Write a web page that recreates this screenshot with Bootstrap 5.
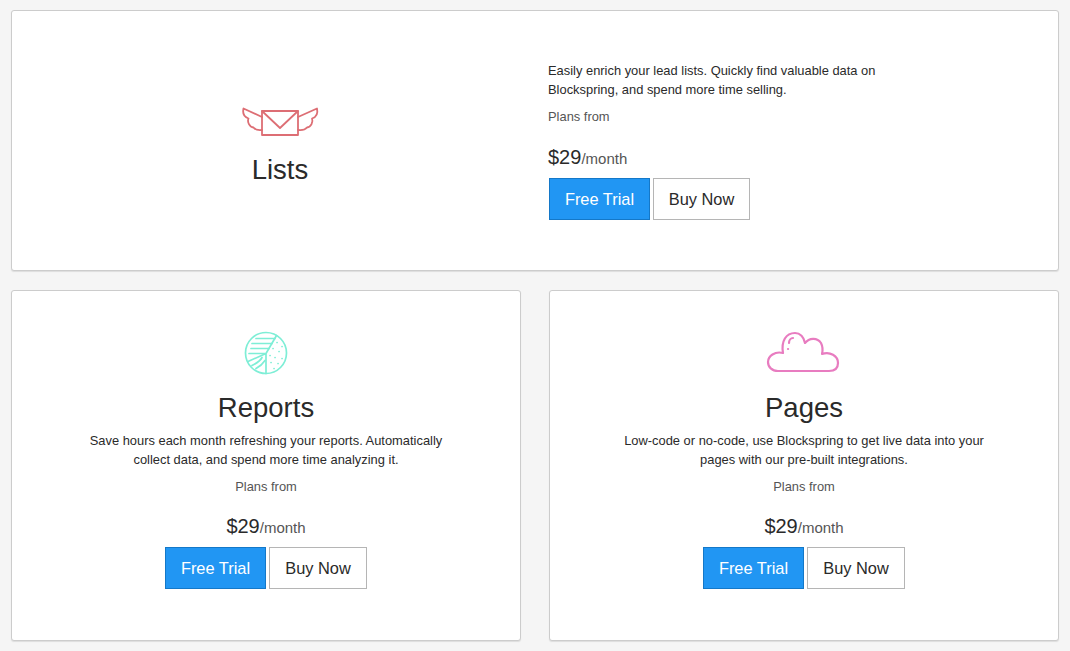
<!DOCTYPE html>
<html lang="en">
<head>
    <meta charset="UTF-8">
    <meta name="viewport" content="width=device-width, initial-scale=1.0">
    <title>Blockspring Plans</title>
    <link href="https://cdn.jsdelivr.net/npm/bootstrap@5.3.0/dist/css/bootstrap.min.css" rel="stylesheet">
    <style>
        body { background: #f5f5f5; padding: 10px 11px; font-family: "Liberation Sans", Arial, sans-serif; color: #222; overflow: hidden; }
        .plan-card { background: #fff; border: 1px solid #ccc; border-radius: 3px; box-shadow: 0 1px 1px #ddd; }
        .plan-top { height: 261px; margin-bottom: 19px; }
        .plan-grid { display: grid; grid-template-columns: 510px 510px; column-gap: 28px; }
        .plan-bottom { height: 351px; padding-top: 40px; }
        .plan-side { width: 536px; padding-top: 95px; }
        .plan-info { padding-top: 50px; }
        .plan-title { font-size: 27.5px; line-height: 34px; font-weight: 400; margin: 0; color: #2a2a2a; }
        .plan-desc { font-size: 12.9px; line-height: 19px; margin: 0; color: #2a2a2a; }
        .plan-from { font-size: 12.9px; line-height: 18px; color: #555; margin: 0; }
        .plan-price { font-size: 20px; line-height: 24px; color: #2a2a2a; margin: 0; }
        .plan-price small { font-size: 15px; color: #555; }
        .plan-actions { gap: 3px; }
        .btn-trial, .btn-buy { font-size: 16.4px; line-height: 20px; border-radius: 0; padding: 10px 12px; height: 42px; }
        .btn-trial { background: #2196f3; border: 1px solid #1478c8; color: #fff; width: 101px; }
        .btn-buy { background: #fff; border: 1px solid #b5b5b5; color: #2a2a2a; width: 97px; }
        .plan-bottom .btn-buy { width: 98px; }
        .plan-icon { display: block; fill: none; stroke-linecap: round; stroke-linejoin: round; margin-bottom: 15px; overflow: visible; }
        .plan-bottom .plan-icon { margin-bottom: 16px; }
        .icon-mail { stroke: #dd6e74; stroke-width: 1.8; }
        .icon-pie { stroke: #7eeed6; stroke-width: 1.7; }
        .icon-cloud { stroke: #e87cc0; stroke-width: 2.2; }
        .plan-bottom .plan-desc { margin-top: 6px; }
        .plan-bottom .plan-from { margin-top: 9px; }
        .plan-bottom .plan-price { margin-top: 18px; margin-bottom: 7px; }
        .plan-info .plan-from { margin-top: 9px; }
        .plan-info .plan-price { margin-top: 19px; margin-bottom: 7px; }
        .plan-info .plan-actions { padding-left: 1px; }
    </style>
</head>
<body>
    <div class="plan-card plan-top d-flex">
        <div class="plan-side text-center">
            <svg class="plan-icon icon-mail mx-auto" width="76" height="32" viewBox="0 0 76 32">
                <rect x="20" y="5" width="36" height="24"/>
                <path d="M20 5 38 22 56 5"/>
                <path d="M20 11 1.500 2.500C.5 7 2 11 6.500 12.500 5 16 7.500 21 11.500 21.500 13.500 24 16 24.500 20 24"/>
                <path d="M56 11 75 2.500C76 7 74.500 11 70 12.500 71.500 16 69 21 65 21.500 63 24 60 24.500 56 24"/>
            </svg>
            <h2 class="plan-title">Lists</h2>
        </div>
        <div class="plan-info">
            <p class="plan-desc">Easily enrich your lead lists. Quickly find valuable data on<br>Blockspring, and spend more time selling.</p>
            <p class="plan-from">Plans from</p>
            <p class="plan-price">$29<small>/month</small></p>
            <div class="plan-actions d-flex">
                <button class="btn btn-trial">Free Trial</button>
                <button class="btn btn-buy">Buy Now</button>
            </div>
        </div>
    </div>
    <div class="plan-grid">
        <div class="plan-card plan-bottom text-center">
            <svg class="plan-icon icon-pie mx-auto" width="44" height="44" viewBox="0 0 44 44">
                <circle cx="22" cy="22" r="20.500"/>
                <path d="M22 22.500 32.500 4.500M22 22.500V42.500M22 22.500 4 30.500"/>
                <path d="M12 7.500H31M8 12.500H28M7 17.500H25M5 22.500H21"/>
                <path d="M8 34.500C12 32.500 16 30.500 18 26.500M12 37.500C16 35.500 19 32.500 21 29.500"/>
                <path d="M33 11.500h.1M38 15.500h.1M29 17.500h.1M35 20.500h.1M26 24.500h.1M31 26.500h.1M38 27.500h.1M27 31.500h.1M34 32.500h.1M30 37.500h.1"/>
            </svg>
            <h2 class="plan-title">Reports</h2>
            <p class="plan-desc">Save hours each month refreshing your reports. Automatically<br>collect data, and spend more time analyzing it.</p>
            <p class="plan-from">Plans from</p>
            <p class="plan-price">$29<small>/month</small></p>
            <div class="plan-actions d-flex justify-content-center">
                <button class="btn btn-trial">Free Trial</button>
                <button class="btn btn-buy">Buy Now</button>
            </div>
        </div>
        <div class="plan-card plan-bottom text-center">
            <svg class="plan-icon icon-cloud mx-auto" width="72" height="44" viewBox="0 0 72 44">
                <path d="M10 40C4 40 0 36 0 31 0 25 7 20 15 22 13 10 18 2 27 2 32 2 36 6 37 12 41 7 49 6 53 12 55 16 55 19 54 23 62 20 70 25 70 32 70 37 67 40 61 40Z"/>
                <path d="M21 12C21 9 23 7 25 7M20 18h.1"/>
            </svg>
            <h2 class="plan-title">Pages</h2>
            <p class="plan-desc">Low-code or no-code, use Blockspring to get live data into your<br>pages with our pre-built integrations.</p>
            <p class="plan-from">Plans from</p>
            <p class="plan-price">$29<small>/month</small></p>
            <div class="plan-actions d-flex justify-content-center">
                <button class="btn btn-trial">Free Trial</button>
                <button class="btn btn-buy">Buy Now</button>
            </div>
        </div>
    </div>
    <script src="https://cdn.jsdelivr.net/npm/bootstrap@5.3.0/dist/js/bootstrap.bundle.min.js"></script>
</body>
</html>
